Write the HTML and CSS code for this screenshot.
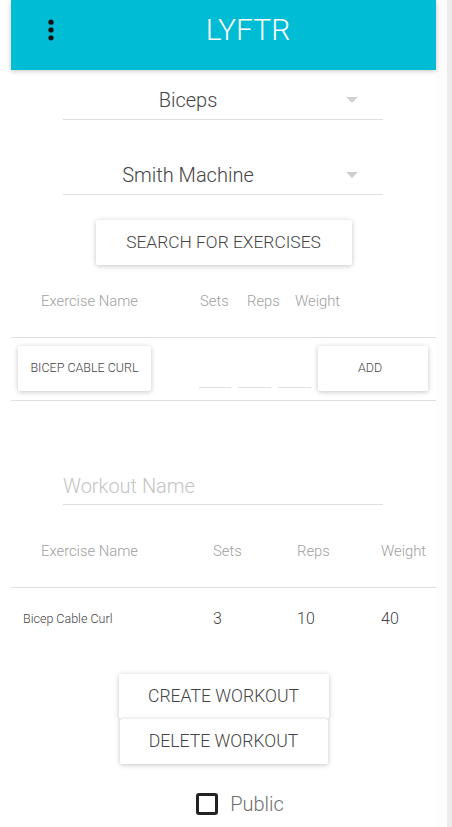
FILE: index.html
```html
<!DOCTYPE html>
<html lang="en">
<head>
<meta charset="utf-8">
<title>LYFTR</title>
<link rel="stylesheet" href="styles.css">
</head>
<body>
<div class="page">
  <main class="app">
    <header class="bar">
      <div class="menu-btn">
        <svg class="dots" width="24" height="28" viewBox="0 0 24 28" aria-hidden="true">
          <circle cx="12" cy="6.2" r="2.6"/>
          <circle cx="12" cy="13.9" r="2.6"/>
          <circle cx="12" cy="21.8" r="2.6"/>
        </svg>
      </div>
      <h1 class="title">LYFTR</h1>
    </header>

    <div class="select select-first">
      <span class="sel-text">Biceps</span>
      <span class="arrow"></span>
    </div>
    <div class="select select-second">
      <span class="sel-text">Smith Machine</span>
      <span class="arrow"></span>
    </div>

    <div class="center">
      <button class="raised search-btn">Search for exercises</button>
    </div>

    <div class="t1-head">
      <span class="c-name">Exercise Name</span>
      <span class="c-sets">Sets</span>
      <span class="c-reps">Reps</span>
      <span class="c-weight">Weight</span>
    </div>
    <div class="t1-row">
      <button class="raised ex-btn">Bicep Cable Curl</button>
      <span class="num-input in1"></span>
      <span class="num-input in2"></span>
      <span class="num-input in3"></span>
      <button class="raised add-btn">Add</button>
    </div>

    <div class="workout-field">
      <span class="placeholder">Workout Name</span>
    </div>

    <div class="t2-head">
      <span class="h-name">Exercise Name</span>
      <span>Sets</span>
      <span>Reps</span>
      <span>Weight</span>
    </div>
    <div class="t2-row">
      <span class="r-name">Bicep Cable Curl</span>
      <span class="r-num">3</span>
      <span class="r-num">10</span>
      <span class="r-num">40</span>
    </div>

    <div class="actions">
      <button class="raised act-btn create-btn">Create Workout</button>
      <button class="raised act-btn delete-btn">Delete Workout</button>
    </div>

    <label class="check">
      <span class="box"></span>
      <span class="check-label">Public</span>
    </label>
  </main>
  <div class="gutter"></div>
  <div class="track"></div>
</div>
</body>
</html>
```

FILE: styles.css
```css
html, body {
  margin: 0;
  padding: 0;
  height: 827px;
  overflow: hidden;
  background: #ffffff;
}

body {
  font-family: Roboto, "Noto Sans", "Liberation Sans", sans-serif;
  font-weight: 300;
  color: #4a4a4a;
}

.page {
  display: flex;
  height: 827px;
}

.app {
  width: 425px;
  margin-left: 11px;
  display: flex;
  flex-direction: column;
}

.gutter {
  flex: 1;
  background: #fdfdfd;
}

.track {
  width: 5px;
  background: #ececec;
}

/* header */
.bar {
  height: 70px;
  box-sizing: border-box;
  padding-bottom: 11px;
  background: #00bcd4;
  display: flex;
  align-items: center;
  box-shadow: 0 1px 6px rgba(0, 0, 0, 0.12), 0 1px 4px rgba(0, 0, 0, 0.12);
  position: relative;
  z-index: 1;
}

.menu-btn {
  width: 48px;
  height: 48px;
  margin-left: 16px;
  display: flex;
  align-items: center;
  justify-content: center;
}

.dots {
  fill: #111111;
}

.title {
  flex: 1;
  margin: 0;
  padding-right: 15px;
  text-align: center;
  font-size: 30px;
  font-weight: 300;
  line-height: 1;
  color: #ffffff;
}

/* selects */
.select {
  width: 320px;
  height: 40px;
  box-sizing: border-box;
  margin-left: 52px;
  border-bottom: 1px solid #e0e0e0;
  display: flex;
  align-items: center;
}

.select-first {
  margin-top: 10px;
}

.select-second {
  margin-top: 35px;
}

.sel-text {
  width: 250px;
  text-align: center;
  font-size: 20px;
  line-height: 1;
  color: #444444;
}

.arrow {
  margin-left: 33px;
  width: 0;
  height: 0;
  border-left: 6px solid transparent;
  border-right: 6px solid transparent;
  border-top: 6px solid #d0d0d0;
}

/* raised buttons */
.raised {
  border: 0;
  margin: 0;
  padding: 0;
  background: #ffffff;
  border-radius: 2px;
  box-shadow: 0 1px 6px rgba(0, 0, 0, 0.12), 0 1px 4px rgba(0, 0, 0, 0.12);
  font-family: inherit;
  font-weight: 300;
  color: #444444;
  text-transform: uppercase;
  line-height: 1;
}

.center {
  display: flex;
  justify-content: center;
  margin-top: 25px;
}

.search-btn {
  width: 256px;
  height: 45px;
  font-size: 17.4px;
}

/* table 1 */
.t1-head {
  height: 72px;
  border-bottom: 1px solid #e0e0e0;
  display: grid;
  grid-template-columns: 30px 159px 47px 48px 1fr;
  align-items: center;
  font-size: 14.8px;
  line-height: 1;
  color: #a0a0a0;
}

.t1-head .c-name { grid-column: 2; }

.t1-row {
  height: 63px;
  box-sizing: border-box;
  padding-bottom: 1px;
  border-bottom: 1px solid #e0e0e0;
  display: flex;
  align-items: center;
}

.ex-btn {
  margin-left: 7px;
  width: 133px;
  height: 45px;
  font-size: 12.5px;
}

.num-input {
  align-self: flex-end;
  margin-bottom: 11px;
  height: 30px;
  border-bottom: 1px solid #e0e0e0;
}

.in1 { width: 32px; margin-left: 48px; }
.in2 { width: 33px; margin-left: 7px; }
.in3 { width: 33px; margin-left: 7px; }

.add-btn {
  margin-left: 7px;
  width: 110px;
  height: 45px;
  padding-right: 6px;
  font-size: 12.5px;
}

/* workout name */
.workout-field {
  margin-top: 59px;
  margin-left: 52px;
  width: 320px;
  height: 45px;
  box-sizing: border-box;
  padding-top: 8px;
  border-bottom: 1px solid #e0e0e0;
  display: flex;
  align-items: center;
}

.placeholder {
  font-size: 20px;
  line-height: 1;
  color: #c4c4c4;
}

/* table 2 */
.t2-head,
.t2-row {
  display: grid;
  grid-template-columns: 202px 84px 84px 1fr;
  align-items: center;
  line-height: 1;
}

.t2-head {
  height: 83px;
  box-sizing: border-box;
  padding-top: 10px;
  border-bottom: 1px solid #e0e0e0;
  font-size: 14.8px;
  color: #a0a0a0;
}

.h-name {
  padding-left: 30px;
}

.t2-row {
  height: 62px;
  font-size: 16px;
  color: #444444;
}

.r-name {
  padding-left: 12px;
  font-size: 12.5px;
  color: #444444;
}

.r-num:first-of-type { padding-left: 2px; }

/* actions */
.actions {
  margin-top: 24px;
  display: flex;
  flex-direction: column;
  align-items: center;
}

.act-btn {
  height: 45px;
  font-size: 17.6px;
}

.create-btn { width: 210px; }
.delete-btn { width: 208px; }

/* checkbox */
.check {
  margin-top: 29px;
  display: flex;
  align-items: center;
  justify-content: center;
  padding-left: 33px;
}

.box {
  width: 22px;
  height: 22px;
  box-sizing: border-box;
  border: 3px solid #222222;
  border-radius: 3px;
}

.check-label {
  margin-left: 12px;
  font-size: 20px;
  line-height: 1;
  color: #6e6e6e;
}
```
